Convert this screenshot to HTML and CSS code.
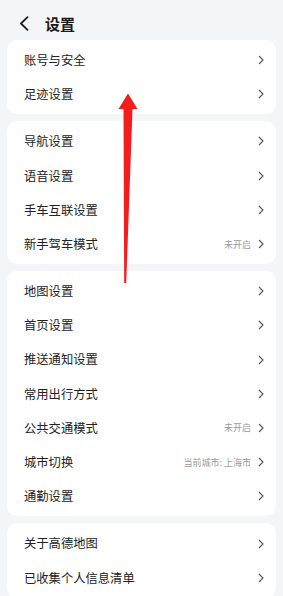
FILE: index.html
```html
<!DOCTYPE html>
<html lang="zh">
<head>
<meta charset="utf-8">
<link rel="stylesheet" href="styles.css">
</head>
<body>
<div class="page">
  <header class="topbar">
    <svg class="back" width="10" height="15" viewBox="0 0 10 15"><path d="M8.5 1.2 L2 7.5 L8.5 13.8" fill="none" stroke="#1f1f1f" stroke-width="1.8" stroke-linecap="round" stroke-linejoin="round"/></svg>
    <h1 class="title">设置</h1>
  </header>
  <main class="cards">
    <section class="card">
      <div class="row"><span class="label">账号与安全</span><svg class="chev" viewBox="0 0 6 10"><path d="M1 1 L5 5 L1 9"/></svg></div>
      <div class="row"><span class="label">足迹设置</span><svg class="chev" viewBox="0 0 6 10"><path d="M1 1 L5 5 L1 9"/></svg></div>
    </section>
    <section class="card">
      <div class="row"><span class="label">导航设置</span><svg class="chev" viewBox="0 0 6 10"><path d="M1 1 L5 5 L1 9"/></svg></div>
      <div class="row"><span class="label">语音设置</span><svg class="chev" viewBox="0 0 6 10"><path d="M1 1 L5 5 L1 9"/></svg></div>
      <div class="row"><span class="label">手车互联设置</span><svg class="chev" viewBox="0 0 6 10"><path d="M1 1 L5 5 L1 9"/></svg></div>
      <div class="row"><span class="label">新手驾车模式</span><span class="value">未开启</span><svg class="chev" viewBox="0 0 6 10"><path d="M1 1 L5 5 L1 9"/></svg></div>
    </section>
    <section class="card">
      <div class="row"><span class="label">地图设置</span><svg class="chev" viewBox="0 0 6 10"><path d="M1 1 L5 5 L1 9"/></svg></div>
      <div class="row"><span class="label">首页设置</span><svg class="chev" viewBox="0 0 6 10"><path d="M1 1 L5 5 L1 9"/></svg></div>
      <div class="row"><span class="label">推送通知设置</span><svg class="chev" viewBox="0 0 6 10"><path d="M1 1 L5 5 L1 9"/></svg></div>
      <div class="row"><span class="label">常用出行方式</span><svg class="chev" viewBox="0 0 6 10"><path d="M1 1 L5 5 L1 9"/></svg></div>
      <div class="row"><span class="label">公共交通模式</span><span class="value">未开启</span><svg class="chev" viewBox="0 0 6 10"><path d="M1 1 L5 5 L1 9"/></svg></div>
      <div class="row"><span class="label">城市切换</span><span class="value">当前城市: 上海市</span><svg class="chev" viewBox="0 0 6 10"><path d="M1 1 L5 5 L1 9"/></svg></div>
      <div class="row"><span class="label">通勤设置</span><svg class="chev" viewBox="0 0 6 10"><path d="M1 1 L5 5 L1 9"/></svg></div>
    </section>
    <section class="card">
      <div class="row"><span class="label">关于高德地图</span><svg class="chev" viewBox="0 0 6 10"><path d="M1 1 L5 5 L1 9"/></svg></div>
      <div class="row"><span class="label">已收集个人信息清单</span><svg class="chev" viewBox="0 0 6 10"><path d="M1 1 L5 5 L1 9"/></svg></div>
    </section>
  </main>
  <svg class="arrow" width="283" height="596" viewBox="0 0 283 596">
    <polygon points="128,93.5 137.5,109 132.5,109 126.2,283 124.2,283 123.5,109 118.5,109" fill="#f41d1d"/>
  </svg>
</div>
</body>
</html>
```

FILE: styles.css
```css
* { box-sizing: border-box; }
html, body { margin: 0; padding: 0; }
body {
  background: #f4f5f7;
  font-family: "Noto Sans CJK SC", "Noto Sans", sans-serif;
  color: #222;
  width: 283px;
  height: 596px;
  overflow: hidden;
}
.page { position: relative; }
.topbar {
  height: 40px;
  display: flex;
  align-items: center;
  padding-left: 19px;
  padding-top: 7px;
}
.back { display: block; margin-right: 16px; }
.title {
  margin: 0;
  font-size: 15px;
  font-weight: 700;
  color: #1a1a1a;
  line-height: 1;
}
.cards {
  display: flex;
  flex-direction: column;
  gap: 7px;
  padding: 0 7px;
}
.card {
  background: #fff;
  border-radius: 10px;
  padding: 3px 0;
}
.row {
  height: 34.2px;
  display: flex;
  align-items: center;
  padding: 0 12px 0 17px;
}
.label {
  font-size: 12.3px;
  color: #222;
  flex: 1;
  line-height: 1;
}
.value {
  font-size: 9px;
  color: #9a9a9a;
  margin-right: 7px;
  line-height: 1;
}
.chev {
  width: 6px;
  height: 10px;
  display: block;
  fill: none;
  stroke: #555;
  stroke-width: 1.1;
  stroke-linejoin: miter;
}
.arrow {
  position: absolute;
  left: 0;
  top: 0;
  pointer-events: none;
}
```
